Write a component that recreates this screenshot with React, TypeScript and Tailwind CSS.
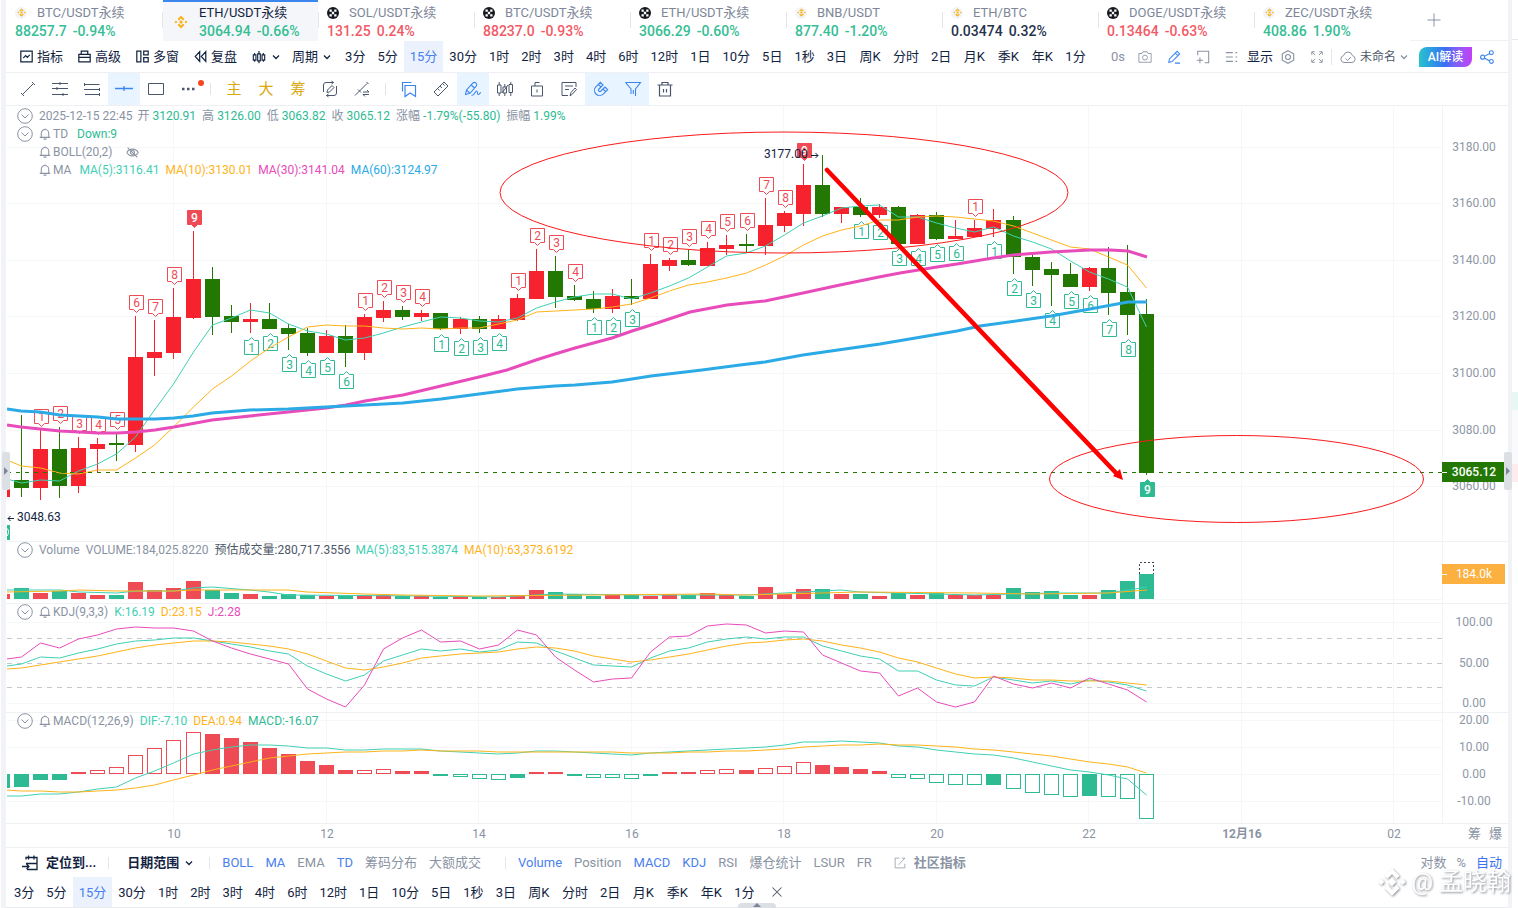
import { useState } from "react"
import type { ReactNode } from "react"
import { clsx } from "clsx"

/* ---------- market tabs ---------- */

const tabs = [
  { name: "BTC/USDT永续", price: "88257.7", change: "-0.94%", tone: "up", source: "binance" },
  { name: "ETH/USDT永续", price: "3064.94", change: "-0.66%", tone: "up", source: "binance", active: true },
  { name: "SOL/USDT永续", price: "131.25", change: "0.24%", tone: "down", source: "okx" },
  { name: "BTC/USDT永续", price: "88237.0", change: "-0.93%", tone: "down", source: "okx" },
  { name: "ETH/USDT永续", price: "3066.29", change: "-0.60%", tone: "up", source: "okx" },
  { name: "BNB/USDT", price: "877.40", change: "-1.20%", tone: "up", source: "binance" },
  { name: "ETH/BTC", price: "0.03474", change: "0.32%", tone: "flat", source: "binance" },
  { name: "DOGE/USDT永续", price: "0.13464", change: "-0.63%", tone: "down", source: "okx" },
  { name: "ZEC/USDT永续", price: "408.86", change: "1.90%", tone: "up", source: "binance" },
]

const frames = [
  "3分", "5分", "15分", "30分", "1时", "2时", "3时", "4时", "6时", "12时", "1日", "10分",
  "5日", "1秒", "3日", "周K", "分时", "2日", "月K", "季K", "年K", "1分",
]

/* ---------- chart data, one entry per 15m bar ---------- */

const RED = "#f6222e"
const GREEN = "#237804"
const SELL = "#ee4b55"
const BUY = "#2ebb93"
const TEAL = "#3fd0b4"
const AMBER = "#ffb31a"
const PINK = "#e84bba"
const BLUE = "#2baae6"

// [up bar, high, body top, body bottom, low]
const candles: [number, number, number, number, number][] = [
  [0, 415, 480, 488, 497], [1, 430, 449, 488, 500], [0, 427, 449, 486, 498], [1, 437, 448, 486, 493],
  [1, 438, 444, 449, 472], [0, 433, 443, 445, 461], [1, 316, 357, 445, 452], [1, 320, 352, 358, 376],
  [1, 288, 317, 353, 359], [1, 231, 279, 318, 319], [0, 267, 279, 317, 335], [0, 305, 316, 322, 333],
  [1, 303, 319, 322, 333], [0, 303, 319, 329, 329], [0, 324, 328, 334, 350], [0, 328, 333, 353, 356],
  [1, 330, 336, 353, 353], [0, 325, 336, 353, 367], [1, 314, 317, 353, 360], [1, 301, 310, 318, 322],
  [0, 306, 310, 317, 320], [1, 310, 313, 317, 321], [0, 313, 313, 329, 330], [1, 317, 319, 329, 334],
  [0, 316, 319, 329, 333], [1, 315, 319, 329, 329], [1, 294, 298, 320, 321], [1, 249, 271, 299, 299],
  [0, 256, 271, 297, 308], [0, 285, 296, 300, 301], [0, 291, 299, 309, 313], [1, 289, 296, 309, 313],
  [0, 279, 296, 299, 305], [1, 254, 264, 299, 299], [1, 258, 260, 266, 271], [0, 250, 260, 265, 266],
  [1, 242, 248, 266, 266], [1, 235, 245, 249, 255], [0, 234, 244, 246, 252], [1, 198, 225, 246, 255],
  [1, 211, 213, 226, 232], [1, 164, 185, 214, 226], [0, 155, 185, 214, 217], [1, 207, 207, 214, 223],
  [0, 198, 207, 215, 217], [1, 204, 207, 215, 218], [0, 206, 207, 244, 244], [1, 214, 215, 244, 244],
  [0, 212, 215, 239, 240], [1, 220, 236, 239, 239], [1, 220, 228, 237, 237], [1, 209, 220, 229, 237],
  [0, 216, 220, 257, 274], [0, 255, 257, 270, 286], [0, 262, 269, 275, 306], [0, 263, 274, 287, 287],
  [1, 267, 268, 287, 291], [0, 247, 268, 293, 315], [0, 245, 292, 315, 335], [0, 299, 314, 473, 475],
]

// TD sequences: [first bar, first number, count]
const sellRuns = [[1, 1, 5], [6, 6, 4], [18, 1, 4], [26, 1, 4], [33, 1, 9], [50, 1, 1]]
const buyRuns = [[12, 1, 6], [22, 1, 4], [30, 1, 3], [44, 1, 6], [51, 1, 9]]

const ma5 = [483, 480, 481, 471, 464, 454, 437, 410, 384, 352, 325, 318, 310, 313, 324, 331, 334, 340, 338, 333, 327, 322, 317, 318, 321, 322, 318, 308, 302, 297, 294, 294, 299, 293, 286, 278, 267, 256, 253, 246, 235, 223, 216, 208, 206, 205, 217, 217, 223, 228, 232, 227, 236, 242, 249, 261, 272, 279, 287, 327]
const ma10 = [466, 468, 473, 474, 470, 470, 458, 445, 427, 407, 389, 376, 361, 348, 337, 327, 325, 326, 326, 328, 329, 328, 329, 328, 328, 324, 320, 312, 311, 310, 309, 307, 304, 298, 291, 285, 282, 278, 273, 265, 256, 245, 236, 230, 226, 220, 220, 217, 216, 217, 219, 221, 226, 233, 240, 247, 249, 257, 265, 288]
const kdjK = [664, 657, 658, 653, 649, 644, 641, 640, 638, 638, 641, 644, 647, 651, 654, 666, 674, 681, 675, 661, 655, 649, 651, 649, 652, 650, 642, 643, 651, 658, 665, 666, 667, 658, 651, 648, 642, 639, 637, 639, 637, 637, 646, 651, 656, 659, 671, 671, 680, 685, 686, 677, 680, 683, 681, 684, 680, 682, 685, 691]
const kdjD = [668, 665, 662, 659, 656, 652, 648, 645, 643, 641, 641, 642, 644, 646, 649, 654, 661, 668, 670, 667, 663, 658, 656, 654, 653, 652, 649, 647, 648, 651, 656, 659, 662, 660, 657, 654, 650, 646, 643, 642, 640, 639, 641, 645, 648, 652, 658, 662, 668, 674, 678, 677, 678, 680, 680, 681, 681, 681, 683, 685]
const kdjJ = [657, 643, 648, 639, 635, 629, 627, 628, 628, 631, 641, 648, 654, 659, 664, 689, 699, 707, 685, 649, 638, 630, 642, 641, 649, 645, 630, 635, 657, 670, 682, 679, 678, 652, 637, 636, 626, 624, 625, 633, 631, 632, 655, 663, 671, 673, 696, 688, 702, 707, 702, 676, 684, 688, 683, 688, 678, 684, 690, 702]
const dif = [796, 794, 794, 792, 789, 787, 778, 771, 763, 754, 750, 747, 745, 745, 746, 748, 748, 750, 750, 749, 749, 749, 751, 752, 753, 754, 753, 751, 751, 752, 753, 754, 755, 753, 752, 751, 750, 749, 748, 747, 745, 742, 742, 741, 742, 743, 746, 747, 750, 752, 754, 755, 758, 762, 766, 770, 772, 775, 779, 795]
const dea = [791, 791, 792, 792, 791, 790, 788, 785, 780, 775, 770, 766, 762, 758, 756, 754, 753, 752, 752, 751, 751, 750, 751, 751, 751, 752, 752, 752, 752, 752, 752, 752, 753, 753, 753, 752, 752, 751, 751, 750, 749, 747, 746, 745, 745, 744, 745, 745, 746, 747, 749, 750, 752, 754, 756, 759, 762, 764, 767, 773]
const volTop = [588, 593, 591, 593, 595, 595, 582, 590, 588, 581, 590, 593, 594, 596, 594, 595, 596, 595, 595, 595, 596, 596, 597, 597, 597, 597, 595, 590, 592, 594, 596, 595, 595, 596, 594, 595, 593, 595, 596, 587, 594, 589, 589, 594, 594, 596, 593, 595, 593, 595, 595, 595, 588, 592, 591, 595, 595, 590, 581, 574]

// MACD histogram end, h = hollow bar
const hist = "787 780 780 772 770h 767h 755h 748h 740h 732h 734 738 742 748 754 761 765 770 770h 769h 771 771 776 777h 779h 780h 778 772 772 776 778h 778h 779h 776 772 772 770h 769h 770 768h 766h 762h 765 767 769 771 778h 779h 783h 785h 785h 785 789h 793h 795h 797h 796 797h 799h 819h".split(" ")

const ma30: number[][] = [[7, 425], [21, 427], [40, 429], [60, 431], [98, 433], [117, 433], [136, 432], [155, 430], [174, 427], [212, 420], [250, 416], [288, 412], [326, 408], [346, 405], [365, 401], [403, 395], [441, 386], [479, 377], [507, 370], [536, 360], [555, 354], [575, 348], [612, 338], [632, 331], [651, 325], [690, 312], [727, 305], [765, 301], [803, 293], [840, 285], [879, 277], [900, 273], [937, 267], [957, 264], [993, 258], [1013, 255], [1051, 252], [1090, 250], [1110, 250], [1128, 251], [1147, 257]]
const ma60: number[][] = [[7, 409], [21, 411], [40, 412], [60, 415], [98, 417], [117, 419], [155, 419], [174, 418], [193, 416], [212, 413], [250, 410], [288, 409], [326, 407], [365, 405], [403, 403], [441, 399], [479, 394], [517, 389], [555, 386], [575, 385], [612, 382], [632, 379], [651, 376], [702, 370], [740, 365], [765, 362], [803, 355], [880, 344], [957, 331], [980, 326], [1051, 316], [1090, 309], [1128, 302], [1147, 302]]
const volMa5: number[][] = [[7, 590], [60, 590], [79, 592], [117, 593], [136, 591], [174, 591], [193, 588], [212, 587], [250, 590], [269, 592], [288, 595], [422, 596], [498, 597], [555, 594], [650, 595], [746, 595], [803, 592], [841, 590], [860, 592], [898, 593], [974, 595], [1051, 593], [1108, 593], [1128, 590], [1147, 587]]
const volMa10: number[][] = [[7, 592], [60, 591], [79, 590], [117, 591], [174, 591], [193, 590], [288, 590], [307, 592], [365, 594], [403, 595], [479, 596], [593, 595], [707, 594], [746, 595], [822, 593], [860, 592], [974, 593], [1032, 594], [1108, 593], [1147, 590]]

const times = [[174, "10"], [327, "12"], [479, "14"], [632, "16"], [784, "18"], [937, "20"], [1089, "22"], [1242, "12月16"], [1394, "02"]] as const

const barX = (i: number) => Math.floor(21.4 + 19.07 * i)
const series = (ys: number[], start: number) =>
  `7,${start} ` + ys.map((y, i) => `${barX(i) + 0.5},${y}`).join(" ")
const points = (pts: number[][]) => pts.map((p) => p.join(",")).join(" ")

/* ---------- icons ---------- */

function Icon({ size = 16, className, children }: { size?: number; className?: string; children: ReactNode }) {
  return (
    <svg width={size} height={size} viewBox="0 0 16 16" fill="none" stroke="currentColor" className={clsx("shrink-0", className)} aria-hidden="true">
      {children}
    </svg>
  )
}

const Chevron = ({ className }: { className?: string }) => (
  <Icon size={8} className={className}><path d="M2 5l6 6 6-6" strokeWidth="2.600" /></Icon>
)

function BinanceMark({ size }: { size: number }) {
  return (
    <svg width={size} height={size} viewBox="0 0 24 24" fill="#f9b21a" className="shrink-0" aria-hidden="true">
      <path d="M12 1l6 6-2.400 2.400L12 5.800 8.400 9.400 6 7zM12 23l6-6-2.400-2.400L12 18.200l-3.600-3.600L6 17zM3.400 9.600L5.800 12l-2.400 2.400L1 12zM20.600 9.600L23 12l-2.400 2.400L18.200 12zM12 8.600l3.400 3.400-3.400 3.400L8.600 12z" />
    </svg>
  )
}

function OkxMark() {
  return (
    <svg width="12" height="12" viewBox="0 0 12 12" className="shrink-0" aria-hidden="true">
      <circle cx="6" cy="6" r="6" fill="#15181f" />
      <path d="M2.500 2.500h2.300v2.300H2.500zM7.200 2.500h2.300v2.300H7.200zM4.850 4.850h2.300v2.300h-2.300zM2.500 7.200h2.300v2.300H2.500zM7.200 7.200h2.300v2.300H7.200z" fill="#fff" />
    </svg>
  )
}

const Bell = () => (
  <Icon size={12}>
    <path d="M1 12.500h14M3 12.500V7a5 5 0 0 1 10 0v5.500M8 2V.5M6 14.800h4" strokeWidth="1.400" />
  </Icon>
)

/* ---------- header rows ---------- */

function MarketTabs() {
  return (
    <nav className="flex h-[41px] bg-white">
      {tabs.map((tab, i) => (
        <button
          key={i}
          className={clsx(
            "relative flex shrink items-center border-t-2 text-left whitespace-nowrap",
            tab.active ? "ml-px w-[155px] border-[#3c86f0] bg-[#f5f6fa]" : "w-[156px] border-transparent"
          )}
        >
          {i > 0 && <span className={clsx("absolute top-2.5 h-4 w-px bg-[#e4e6eb]", tab.active ? "-left-px" : "left-0")} />}
          {tab.active && <span className="ml-[11px] flex w-[25px]"><BinanceMark size={14} /></span>}
          <span className={clsx("flex flex-col", !tab.active && "ml-[9px]")}>
            <span className={clsx("flex h-[19px] items-center text-[13px]", tab.active ? "text-[#12233f]" : "text-[#7e8798]")}>
              {!tab.active && (
                <span className="flex w-[22px]">
                  {tab.source === "okx" ? (
                    <OkxMark />
                  ) : (
                    <span className="flex h-3 w-3 items-center justify-center rounded-full bg-[#f3f4f6]"><BinanceMark size={9} /></span>
                  )}
                </span>
              )}
              {tab.name}
            </span>
            <span
              className={clsx(
                "flex h-[18px] items-center gap-1.5 text-[14px] font-medium",
                tab.tone === "up" && "text-[#36be94]",
                tab.tone === "down" && "text-[#f25a66]",
                tab.tone === "flat" && "text-[#25324b]"
              )}
            >
              <span>{tab.price}</span>
              <span>{tab.change}</span>
            </span>
          </span>
        </button>
      ))}
      <button aria-label="添加" className="flex min-w-12 flex-1 items-center border-b border-[#f0f1f4] pl-4 text-[#8a93a3]">
        <Icon><path d="M8 1.500v13M1.500 8h13" /></Icon>
      </button>
    </nav>
  )
}

function Frames({ value, onChange }: { value: string; onChange: (f: string) => void }) {
  return (
    <div className="flex h-full shrink-0">
      {frames.map((f) => (
        <button
          key={f}
          onClick={() => onChange(f)}
          className={clsx(
            "px-1.5 text-[13px] whitespace-nowrap",
            f.endsWith("K") && "min-w-[34px]",
            f === value ? "bg-[#ebf2fe] text-[#4a80ee]" : "text-[#12233f]"
          )}
        >
          {f}
        </button>
      ))}
    </div>
  )
}

function Toolbar({ value, onChange }: { value: string; onChange: (f: string) => void }) {
  return (
    <div className="flex h-8 items-center border-b border-[#eff0f3] text-[13px] whitespace-nowrap text-[#12233f]">
      <div className="flex shrink-0 items-center gap-[15px] pl-3.5">
        <button className="flex items-center gap-1">
          <Icon size={13}><path d="M1 1.500h14v13H1zM4 10l3-3 2 2 3-3" strokeWidth="1.500" /></Icon>指标
        </button>
        <button className="flex items-center gap-1">
          <Icon size={13}><path d="M1 5.500h14v9H1zM1 9h14M4 5V1.500h8V5" strokeWidth="1.500" /></Icon>高级
        </button>
        <button className="flex items-center gap-1">
          <Icon size={13}><path d="M1 1.500h5v13H1zM9.500 1.500H15V6H9.500zM9.500 9.500H15v5H9.500z" strokeWidth="1.500" /></Icon>多窗
        </button>
        <button className="flex items-center gap-1">
          <Icon size={13}><path d="M7 2L1.500 8 7 14zM14.500 2L9 8l5.500 6z" strokeWidth="1.500" /></Icon>复盘
        </button>
        <button aria-label="K线样式" className="flex items-center gap-1.5">
          <Icon size={14}><path d="M1.500 5.500h3v6h-3zM6.500 4.500h3v8h-3zM11.500 5.500h3v6h-3zM3 3.500v2M3 11.500v2M8 1v3.500M8 12.500V15M13 3.500v2M13 11.500v2" strokeWidth="1.300" /></Icon>
          <Chevron />
        </button>
      </div>
      <button className="ml-3 flex shrink-0 items-center gap-[5px] pr-2">周期<Chevron /></button>
      <Frames value={value} onChange={onChange} />
      <div className="ml-auto flex shrink-0 items-center pr-3.5 text-[#8a93a3]">
        <span className="mr-[13px]">0s</span>
        <div className="flex items-center gap-[15px]">
          <button aria-label="截图"><Icon size={14}><path d="M1 4h3.500l1-2h5l1 2H15v10H1zM8 11.500a2.800 2.800 0 1 0 0-5.600 2.800 2.800 0 0 0 0 5.600" /></Icon></button>
          <button aria-label="画线" className="text-[#3c86f0]"><Icon size={14}><path d="M2 14l.8-3.800L11.500 1.500l3 3L5.800 13.200zM9.500 3.500l3 3M9 15h6" strokeWidth="1.200" /></Icon></button>
          <button aria-label="添加窗口"><Icon size={14}><path d="M2 6V1.500h12.500v13H10M4.500 8.500v6.500M1 11.800h7" strokeWidth="1.200" /></Icon></button>
          <button aria-label="列表"><Icon size={14}><path d="M1 3h8M1 8h8M1 13h8M12 3h2M12 8h2M12 13h2" strokeWidth="1.200" /></Icon></button>
        </div>
        <button className="mr-2 ml-2 text-[#12233f]">显示</button>
        <button aria-label="设置" className="mr-4"><Icon size={14}><path d="M8 .8l6.500 3.600v7.200L8 15.200l-6.500-3.600V4.400zM8 10.800a2.800 2.800 0 1 0 0-5.600 2.800 2.800 0 0 0 0 5.600" strokeWidth="1.300" /></Icon></button>
        <button aria-label="全屏"><Icon size={12}><path d="M1 5V1h4M11 1h4v4M15 11v4h-4M5 15H1v-4M1.500 1.500l4 4M14.500 1.500l-4 4M14.500 14.500l-4-4M1.500 14.500l4-4" strokeWidth="1.300" /></Icon></button>
        <span className="mx-2 h-4 w-px bg-[#e4e6eb]" />
        <button className="flex items-center gap-1 text-[12px] text-[#4d5769]">
          <Icon className="text-[#8a93a3]"><path d="M4 13.500a3.500 3.500 0 0 1-.4-6.900 4.500 4.500 0 0 1 8.800 0 3.500 3.500 0 0 1-.4 6.900zM5.500 9.500l2 2 3.500-3.500" /></Icon>
          未命名
          <Chevron className="text-[#8a93a3]" />
        </button>
        <button className="ml-[11px] h-5 w-[53px] rounded-tl-lg rounded-br-lg bg-linear-to-r from-[#2ac1cc] via-[#3a6cf5] to-[#c33cf7] text-[12px] font-medium text-white">
          AI解读
        </button>
        <button aria-label="分享" className="ml-2 text-[#3c86f0]">
          <Icon size={14}><path d="M5.500 7L11 4M5.500 9.500L11 12.500M3 10.500a2.300 2.300 0 1 0 0-4.600 2.300 2.300 0 0 0 0 4.600M13 5.300A2.200 2.200 0 1 0 13 .9a2.200 2.200 0 0 0 0 4.400M13 15.300a2.200 2.200 0 1 0 0-4.400 2.200 2.200 0 0 0 0 4.400" strokeWidth="1.300" /></Icon>
        </button>
      </div>
    </div>
  )
}

const drawTools: { label: string; icon?: ReactNode; text?: string; active?: boolean; dot?: boolean; split?: string }[] = [
  { label: "线段", icon: <path d="M2.500 13.500l11-11M1 12l3 3M12 1l3 3" /> },
  { label: "平行线", icon: <path d="M0 2.500h16M0 7.500h16M0 13.500h16M8 1v3M5 6v3M11 12v3" /> },
  { label: "通道", icon: <path d="M0 3.500h15.500M0 8.500h15.500M1 13.500h15M.5 2v3M15.500 7v3M15.500 12v3" /> },
  { label: "水平线", icon: <path d="M-1 7.500h18M8 5v5" strokeWidth="1.300" />, active: true },
  { label: "矩形", icon: <path d="M.5 2.500h15v11H.5z" /> },
  { label: "更多", icon: <path d="M2 8h2.500M7 8h2.500M12 8h2.500" strokeWidth="2.500" />, dot: true },
  { label: "主力", text: "主", split: "mr-[7px] ml-1.5" },
  { label: "大单", text: "大" },
  { label: "筹码", text: "筹" },
  { label: "重画", icon: <path d="M1.500 11V4Q1.500 1.500 4 1.500h7.500M9.500 0l2 1.500-2 1.500M14.500 5v7q0 2.500-2.500 2.500H4.500M6.500 13l-2 1.500 2 1.500M5 11.500l.5-2.500 4.500-4.500 2 2L7.500 11z" /> },
  { label: "切换", icon: <path d="M1 14.500L13 2.500M4 8.500l3 3M12.500 1l2 2M9 11h6l-2-2M15 13.500H9l2 2" /> },
  { label: "收藏", icon: <path d="M1.500 10.500v-9h9M4 4.500h10.500v11L9.200 12 4 15.500z" strokeWidth="1.200" />, split: "mx-[7px]" },
  { label: "测量", icon: <path d="M1 11L11 1l4 4L5 15zM4.500 7.500l2 2M7 5l2 2M9.500 2.500l2 2" /> },
  { label: "画笔", icon: <path d="M.5 13.500l1-4.500 6.500-7q1.500-1.200 3 .2t.2 3L5 12.300zM6.200 4l3.300 3M1.500 9l3.500 3.300M6.500 14.500c3.500 0 3.500-4.500 5-4.500s.3 3.500 1.700 3.500 1.300-1.500 2.800-2" strokeWidth="1.100" />, active: true },
  { label: "K线", icon: <path d="M.5 4h3.500v8H.5zM6 6h3.500v6H6zM12 3.500h3.500v8H12zM2.200 1v3M2.200 12v3M7.800 3v3M7.800 12v3M13.800 1v2.500M13.800 11.500V15M5 12l6-8" /> },
  { label: "锁定", icon: <path d="M2.500 5h11v10h-11zM6 5V1.500h4.500M8 8.500v3" /> },
  { label: "备注", icon: <path d="M15 6V1.500H1v13h6M4 5h8M4 8.500h4M9 15l1-3.500L14 7l1.500 1.500L11.500 13z" /> },
  {
    label: "磁铁",
    icon: (
      <g transform="scale(.667) rotate(180 12 12)" strokeWidth="1.700">
        <path d="M6 15l-4-4 6.750-6.770a7.790 7.790 0 0 1 11 11L13 22l-4-4 6.390-6.360a2.140 2.140 0 0 0-3-3L6 15M5 8l4 4M12 15l4 4" />
      </g>
    ),
    active: true,
  },
  { label: "筛选", icon: <path d="M.5 1.500h15L10.500 8v7M.5 1.500L6 8v5M8.300 9v4" strokeWidth="1.100" />, active: true },
  { label: "删除", icon: <path d="M.5 4h15M2.500 4v11h11V4M5 3.500v-2h6v2M6.500 8v3.500M9.500 8v3.500" strokeWidth="1.200" /> },
]

function DrawBar() {
  return (
    <div className="flex h-[33px] border-b border-[#eff0f3] pl-1.5">
      {drawTools.map((t) => (
        <div key={t.label} className="flex shrink-0 items-center">
          {t.split && <span className={clsx("h-3 w-px bg-[#eadfe2]", t.split)} />}
          <button
            aria-label={t.label}
            className={clsx(
              "relative flex h-full w-8 items-center justify-center",
              t.text && "text-[15px] text-[#d8a80e]",
              !t.text && (t.active || t.label === "收藏") && "text-[#3c86f0]",
              !t.text && !t.active && t.label !== "收藏" && "text-[#4a566c]",
              t.active && "bg-[#e8f4ff]"
            )}
          >
            {t.text ?? <Icon className="overflow-visible">{t.icon}</Icon>}
            {t.dot && <span className="absolute top-[7px] right-0 h-1.5 w-1.5 rounded-full bg-[#f5451f]" />}
          </button>
        </div>
      ))}
    </div>
  )
}

/* ---------- chart panes ---------- */

function Grid({ rows, height, top }: { rows: number[]; height: number; top: number }) {
  return (
    <g stroke="#f6f7f8" shapeRendering="crispEdges">
      {rows.map((y) => <line key={y} x1="7" x2="3000" y1={y + 0.5} y2={y + 0.5} />)}
      {times.map(([x]) => <line key={x} x1={x - 0.5} x2={x - 0.5} y1={top} y2={top + height} />)}
    </g>
  )
}

type PaneProps = { top: number; height: string; size: number; rows: number[]; legend: ReactNode; axis: ReactNode; children: ReactNode }

function Pane({ top, height, size, rows, legend, axis, children }: PaneProps) {
  return (
    <section className={clsx("relative flex border-b border-[#f0f1f4] pl-px", height)}>
      <svg className="h-full min-w-0 flex-1">
        <g transform={`translate(-7 ${-top})`}>
          <Grid rows={rows} height={size} top={top} />
          {children}
        </g>
      </svg>
      <svg className="h-full w-[66px] shrink-0">
        <g transform={`translate(-1442 ${-top})`} fontSize="12" fill="#8e97a6" textAnchor="middle">
          <line x1="1442.500" x2="1442.500" y1={top} y2={top + size} stroke="#f2f3f5" />
          {axis}
        </g>
      </svg>
      <div className="absolute top-0 left-[11px] text-[12px] whitespace-nowrap text-[#8a93a3]">{legend}</div>
    </section>
  )
}

function Toggle() {
  return (
    <button aria-label="折叠" className="mr-1.5 flex">
      <Icon><path d="M8 15.300A7.300 7.300 0 1 0 8 .7a7.300 7.300 0 0 0 0 14.600M4.500 6.500L8 10l3.500-3.500" /></Icon>
    </button>
  )
}

function Tag({ i, n, sell }: { i: number; n: number; sell?: boolean }) {
  const x = barX(i) + 1
  const solid = n === 9
  const color = sell ? SELL : BUY
  const y = sell ? candles[i][1] - 21 : candles[i][4] + 7
  const d = sell
    ? `M${x - 6.5} ${y + 0.5}h14v14h-4l-3 3l-3-3h-4z`
    : `M${x - 6.5} ${y + 0.5}h4l3-3l3 3h4v14h-14z`
  return (
    <g>
      <path d={d} fill={solid ? color : "#fff"} stroke={color} />
      <text x={x + 0.5} y={y + 12} fontSize="12" textAnchor="middle" fontWeight={solid ? 500 : 400} fill={solid ? "#fff" : color}>{n}</text>
    </g>
  )
}

function Ohlc({ label, value }: { label: string; value: string }) {
  return <span className="mr-1.5 flex gap-[3px]">{label}<span className="text-[#2ebb93]">{value}</span></span>
}

function PricePane() {
  const rows = [147, 203, 260, 316, 373, 430, 486]
  return (
    <Pane
      top={106}
      height="h-[436px]"
      size={436}
      rows={rows}
      axis={
        <>
          {rows.map((y, i) => <text key={y} x="1474" y={y + 4}>{(3180 - i * 20).toFixed(2)}</text>)}
          <rect x="1442" y="462" width="62" height="20" fill={GREEN} />
          <path d="M1442 472.500h5" stroke="#fff" />
          <text x="1474" y="476" fill="#fff" fontWeight="500">3065.12</text>
        </>
      }
      legend={
        <div className="pt-px">
          <div className="flex h-[18px] items-center">
            <Toggle />
            <span className="mr-[5px]">2025-12-15 22:45</span>
            <Ohlc label="开" value="3120.91" />
            <Ohlc label="高" value="3126.00" />
            <Ohlc label="低" value="3063.82" />
            <Ohlc label="收" value="3065.12" />
            <Ohlc label="涨幅" value="-1.79%(-55.80)" />
            <Ohlc label="振幅" value="1.99%" />
          </div>
          <div className="flex h-[18px] items-center">
            <Toggle /><Bell /><span className="ml-0.5">TD</span>
            <span className="ml-[9px] text-[#2ebb93]">Down:9</span>
          </div>
          <div className="flex h-[18px] items-center pl-[22px]">
            <Bell /><span className="ml-0.5">BOLL(20,2)</span>
            <button aria-label="显示BOLL" className="ml-[13px]">
              <Icon size={13}><path d="M1 8c3-5.500 11-5.500 14 0-3 5.500-11 5.500-14 0M8 10.500a2.500 2.500 0 1 0 0-5 2.500 2.500 0 0 0 0 5M2 2l12 12" strokeWidth="1.300" /></Icon>
            </button>
          </div>
          <div className="flex h-[18px] items-center pl-[22px]">
            <Bell /><span className="ml-0.5">MA</span>
            <span className="ml-2 text-[#3fd0b4]">MA(5):3116.41</span>
            <span className="ml-1.5 text-[#ffb31a]">MA(10):3130.01</span>
            <span className="ml-1.5 text-[#e84bba]">MA(30):3141.04</span>
            <span className="ml-1.5 text-[#2baae6]">MA(60):3124.97</span>
          </div>
        </div>
      }
    >
      <g shapeRendering="crispEdges">
        <rect x="7" y="489" width="3" height="8" fill={RED} />
        {candles.map(([up, high, top, bottom, low], i) => (
          <g key={i} fill={up ? RED : GREEN}>
            <rect x={barX(i)} y={high} width="1" height={low - high} />
            <rect x={barX(i) - 7} y={top} width="15" height={bottom - top} />
          </g>
        ))}
        <rect x="7" y="525" width="3" height="15" fill={BUY} />
      </g>
      <path d="M7 528.500q2 1.500 1.500 4t-1.500 3.500" fill="none" stroke="#fff" />
      {sellRuns.flatMap(([from, n, count]) => Array.from({ length: count }, (_, k) => <Tag key={`s${from + k}`} i={from + k} n={n + k} sell />))}
      {buyRuns.flatMap(([from, n, count]) => Array.from({ length: count }, (_, k) => <Tag key={`b${from + k}`} i={from + k} n={n + k} />))}
      <g fill="none">
        <polyline points={series(ma5, 479)} stroke={TEAL} />
        <polyline points={series(ma10, 460)} stroke={AMBER} />
        <polyline points={points(ma30)} stroke={PINK} strokeWidth="3" />
        <polyline points={points(ma60)} stroke={BLUE} strokeWidth="3" />
      </g>
      <line x1="7" x2="3000" y1="472.500" y2="472.500" stroke={GREEN} strokeDasharray="4 5" />
      <g fontSize="12" fill="#12233f">
        <text x="17" y="521">3048.63</text>
        <text x="764" y="158">3177.00</text>
      </g>
      <path d="M14 518.500H8M10.500 516l-2.500 2.500 2.500 2.500M811 155.500h7M815.500 153l2.500 2.500-2.500 2.500" stroke="#12233f" fill="none" />
      <g stroke="#fb1a1a" fill="none">
        <ellipse cx="784" cy="192.500" rx="284" ry="60.500" />
        <ellipse cx="1236.500" cy="479" rx="187" ry="43.500" />
      </g>
      <path d="M827 170L1117 474" stroke="#fe0000" strokeWidth="4.500" strokeLinecap="round" />
      <path d="M1123 480l-10-4 7-7z" fill="#fe0000" />
    </Pane>
  )
}

function VolumePane() {
  return (
    <Pane
      top={542}
      height="h-[62px]"
      size={62}
      rows={[599]}
      axis={
        <>
          <rect x="1442" y="564" width="63" height="20" fill="#fbb040" />
          <path d="M1442 574.500h5" stroke="#fff" />
          <text x="1474" y="578" fill="#fff">184.0k</text>
        </>
      }
      legend={
        <div className="flex h-4 items-center">
          <Toggle />
          <span className="mr-1.5">Volume</span>
          <span className="mr-1.5">VOLUME:184,025.8220</span>
          <span className="mr-[5px] text-[#4d5769]">预估成交量:280,717.3556</span>
          <span className="mr-1.5 text-[#3fd0b4]">MA(5):83,515.3874</span>
          <span className="text-[#ffb31a]">MA(10):63,373.6192</span>
        </div>
      }
    >
      <g shapeRendering="crispEdges">
        <rect x="7" y="594" width="3" height="5" fill={SELL} />
        {volTop.map((y, i) => (
          <rect key={i} x={barX(i) - 7} y={y} width="15" height={599 - y} fill={candles[i][0] ? SELL : BUY} />
        ))}
        <path d="M1139.500 574v-11.500h14V574" fill="none" stroke="#3a4458" strokeDasharray="2 2" />
      </g>
      <polyline points={points(volMa5)} fill="none" stroke={TEAL} />
      <polyline points={points(volMa10)} fill="none" stroke={AMBER} />
    </Pane>
  )
}

function KdjPane() {
  return (
    <Pane
      top={604}
      height="h-[109px]"
      size={109}
      rows={[622, 703]}
      axis={
        <>
          <text x="1474" y="626">100.00</text>
          <text x="1474" y="667">50.00</text>
          <text x="1474" y="707">0.00</text>
        </>
      }
      legend={
        <div className="flex h-4 items-center">
          <Toggle /><Bell />
          <span className="mr-1.5 ml-0.5">KDJ(9,3,3)</span>
          <span className="mr-1.5 text-[#3fd0b4]">K:16.19</span>
          <span className="mr-1.5 text-[#ffb31a]">D:23.15</span>
          <span className="text-[#e84bba]">J:2.28</span>
        </div>
      }
    >
      <g stroke="#c6c8cb" strokeDasharray="5 5">
        {[638, 663, 687].map((y) => <line key={y} x1="7" x2="3000" y1={y + 0.5} y2={y + 0.5} />)}
      </g>
      <g fill="none">
        <polyline points={series(kdjK, 666)} stroke={TEAL} />
        <polyline points={series(kdjD, 669)} stroke={AMBER} />
        <polyline points={series(kdjJ, 659)} stroke={PINK} />
      </g>
    </Pane>
  )
}

function MacdPane() {
  return (
    <Pane
      top={713}
      height="h-[111px]"
      size={111}
      rows={[720, 747, 774, 801]}
      axis={
        <>
          <text x="1474" y="724">20.00</text>
          <text x="1474" y="751">10.00</text>
          <text x="1474" y="778">0.00</text>
          <text x="1474" y="805">-10.00</text>
        </>
      }
      legend={
        <div className="flex h-4 items-center">
          <Toggle /><Bell />
          <span className="mr-1.5 ml-0.5">MACD(12,26,9)</span>
          <span className="mr-1.5 text-[#3fd0b4]">DIF:-7.10</span>
          <span className="mr-1.5 text-[#ffb31a]">DEA:0.94</span>
          <span className="text-[#2ebb93]">MACD:-16.07</span>
        </div>
      }
    >
      <g shapeRendering="crispEdges">
        <rect x="7" y="774" width="3" height="14" fill={BUY} />
        {hist.map((h, i) => {
          const end = parseInt(h)
          const color = end < 774 ? SELL : BUY
          const hollow = h.endsWith("h")
          return (
            <rect
              key={i}
              x={barX(i) - 6.5}
              y={Math.min(end, 774) + 0.5}
              width="14"
              height={Math.max(Math.abs(774 - end) - 1, 1)}
              fill={hollow ? "#fff" : color}
              stroke={color}
            />
          )
        })}
      </g>
      <polyline points={series(dif, 796)} fill="none" stroke={TEAL} />
      <polyline points={series(dea, 790)} fill="none" stroke={AMBER} />
    </Pane>
  )
}

function TimeAxis() {
  return (
    <div className="flex h-6 border-b border-[#eff0f3] pl-px text-[13px] text-[#8a93a3]">
      <svg className="h-full min-w-0 flex-1">
        <g transform="translate(-7 -824)" fontSize="12" fill="#8a93a3" textAnchor="middle">
          {times.map(([x, label]) => (
            <text key={x} x={x} y="838" fontWeight={label.length > 2 ? 700 : 400}>{label}</text>
          ))}
        </g>
      </svg>
      <div className="flex w-[66px] shrink-0 items-center justify-end gap-2 pr-1.5 pb-1">
        <button>筹</button>
        <button>爆</button>
      </div>
    </div>
  )
}

/* ---------- footer ---------- */

const mainIndicators = [["BOLL", 1], ["MA", 1], ["EMA", 0], ["TD", 1], ["筹码分布", 0], ["大额成交", 0]] as const
const subIndicators = [["Volume", 1], ["Position", 0], ["MACD", 1], ["KDJ", 1], ["RSI", 0], ["爆仓统计", 0], ["LSUR", 0], ["FR", 0]] as const

function IndicatorBar() {
  return (
    <div className="flex h-[29px] items-center pr-1.5 pl-4 text-[13px] whitespace-nowrap text-[#8a93a3]">
      <button className="flex items-center gap-2 font-bold text-[#12233f]">
        <Icon><path d="M4 4.500V2.500h11v12H5M4 8.500H15M6.500.5v4M12 .5v4M0 11.500h7M4.500 9l2.500 2.500L4.500 14" strokeWidth="1.300" /></Icon>
        定位到...
      </button>
      <span className="mr-[18px] ml-3 h-3 w-px bg-[#e4e6eb]" />
      <button className="flex items-center gap-1.5 font-bold text-[#12233f]">日期范围<Chevron /></button>
      <span className="mr-3 ml-4 h-3 w-px bg-[#e4e6eb]" />
      <div className="flex gap-3">
        {mainIndicators.map(([name, on]) => <button key={name} className={on ? "text-[#4a80ee]" : ""}>{name}</button>)}
      </div>
      <span className="mr-3 ml-6 h-3 w-px bg-[#e4e6eb]" />
      <div className="flex gap-3">
        {subIndicators.map(([name, on]) => <button key={name} className={on ? "text-[#4a80ee]" : ""}>{name}</button>)}
      </div>
      <button className="ml-[22px] flex items-center gap-2 font-bold">
        <Icon size={12}><path d="M7 1.500H1.500v13h13V9M6 10.500L14.500 1.500M10.500 1.500h4" /></Icon>
        社区指标
      </button>
      <div className="ml-auto flex gap-2.5">
        <button>对数</button>
        <button>%</button>
        <button className="text-[#3c72f0]">自动</button>
      </div>
    </div>
  )
}

export default function App() {
  const [frame, setFrame] = useState("15分")

  return (
    <div className="relative flex min-h-screen overflow-hidden bg-white font-['Roboto','Noto_Sans_CJK_SC',sans-serif] leading-none">
      <aside className="flex w-1.5 shrink-0 items-start border-l border-white bg-[#f2f3f7]">
        <button aria-label="展开左栏" className="relative z-10 mt-[452px] ml-px flex h-[38px] w-2 shrink-0 items-center justify-center rounded-xs bg-[#dcdfe4]">
          <svg width="4" height="8" viewBox="0 0 4 8" fill="#7c879b"><path d="M0 0l4 4-4 4z" /></svg>
        </button>
      </aside>

      <main className="flex min-w-0 flex-1 flex-col">
        <MarketTabs />
        <Toolbar value={frame} onChange={setFrame} />
        <DrawBar />
        <PricePane />
        <VolumePane />
        <KdjPane />
        <MacdPane />
        <TimeAxis />
        <IndicatorBar />
        <div className="flex h-[31px] items-center border-b border-[#e8eaee] pl-0.5">
          <Frames value={frame} onChange={setFrame} />
          <button aria-label="关闭" className="ml-2.5 text-[#4d5769]">
            <Icon size={12}><path d="M2 2l12 12M14 2L2 14" strokeWidth="1.400" /></Icon>
          </button>
        </div>
      </main>

      <aside className="flex w-1 shrink-0 items-start justify-end bg-[#f2f3f7]">
        <button aria-label="展开右栏" className="relative z-10 mt-[452px] flex h-[38px] w-2 shrink-0 items-center justify-center rounded-xs bg-[#dcdfe4]">
          <svg width="4" height="8" viewBox="0 0 4 8" fill="#7c879b"><path d="M0 0l4 4-4 4z" /></svg>
        </button>
      </aside>
      <div className="flex w-1.5 shrink-0 flex-col">
        <div className="h-10 border-b border-[#e8eaee]" />
        <div className="mt-[352px] h-[18px] bg-[#e6f8f3]" />
        <div className="h-[54px] bg-[#fafafc]" />
        <div className="h-[18px] bg-[#fdecee]" />
      </div>

      <button aria-label="收起" className="absolute bottom-0 left-[738px] flex h-[5px] w-[38px] justify-center rounded-t-sm bg-[#dcdfe4]">
        <svg width="8" height="4" viewBox="0 0 8 4" fill="#7c879b"><path d="M0 4l4-4 4 4z" /></svg>
      </button>

      <div className="pointer-events-none absolute right-[7px] bottom-[11px] flex items-center gap-1 text-[24px] whitespace-nowrap text-white drop-shadow-[1px_1px_1px_#8e929a]">
        <svg width="30" height="30" viewBox="0 0 24 24" fill="#fff">
          <path d="M12 1l6 6-2.400 2.400L12 5.800 8.400 9.400 6 7zM12 23l6-6-2.400-2.400L12 18.200l-3.600-3.600L6 17zM3.400 9.600L5.800 12l-2.400 2.400L1 12zM20.600 9.600L23 12l-2.400 2.400L18.200 12zM12 8.600l3.400 3.400-3.400 3.400L8.600 12z" />
        </svg>
        <span>@ 孟晓翰</span>
      </div>
    </div>
  )
}
